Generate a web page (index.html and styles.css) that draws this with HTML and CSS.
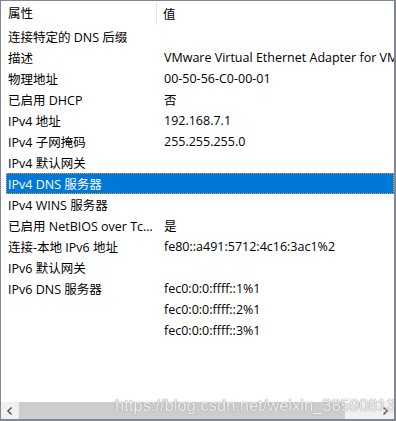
FILE: index.html
```html
<!DOCTYPE html>
<html lang="zh-CN">
<head>
    <meta charset="UTF-8">
    <title>网络连接详细信息</title>
    <link rel="stylesheet" href="styles.css">
</head>
<body>

    <div class="panel">
        <div class="list">
            <div class="header">
                <div class="col-name">属性</div>
                <div class="col-value">值</div>
            </div>

            <div class="row"><div class="name">连接特定的 DNS 后缀</div><div class="value"></div></div>
            <div class="row"><div class="name">描述</div><div class="value">VMware Virtual Ethernet Adapter for VMnet1</div></div>
            <div class="row"><div class="name">物理地址</div><div class="value">00-50-56-C0-00-01</div></div>
            <div class="row"><div class="name">已启用 DHCP</div><div class="value">否</div></div>
            <div class="row"><div class="name">IPv4 地址</div><div class="value">192.168.7.1</div></div>
            <div class="row"><div class="name">IPv4 子网掩码</div><div class="value">255.255.255.0</div></div>
            <div class="row"><div class="name">IPv4 默认网关</div><div class="value"></div></div>
            <div class="row selected"><div class="name">IPv4 DNS 服务器</div><div class="value"></div></div>
            <div class="row"><div class="name">IPv4 WINS 服务器</div><div class="value"></div></div>
            <div class="row"><div class="name">已启用 NetBIOS over Tcpip</div><div class="value">是</div></div>
            <div class="row"><div class="name">连接-本地 IPv6 地址</div><div class="value">fe80::a491:5712:4c16:3ac1%2</div></div>
            <div class="row"><div class="name">IPv6 默认网关</div><div class="value"></div></div>
            <div class="row"><div class="name">IPv6 DNS 服务器</div><div class="value">fec0:0:0:ffff::1%1</div></div>
            <div class="row"><div class="name"></div><div class="value">fec0:0:0:ffff::2%1</div></div>
            <div class="row"><div class="name"></div><div class="value">fec0:0:0:ffff::3%1</div></div>
        </div>

        <div class="hscroll">
            <div class="arrow">
                <svg width="8" height="8" viewBox="0 0 8 8"><path d="M5.5 0.5 L2 4 L5.5 7.5" fill="none" stroke="#606060" stroke-width="1.6"/></svg>
            </div>
            <div class="thumb"></div>
            <div class="track"></div>
            <div class="arrow">
                <svg width="8" height="8" viewBox="0 0 8 8"><path d="M2.5 0.5 L6 4 L2.5 7.5" fill="none" stroke="#606060" stroke-width="1.6"/></svg>
            </div>
        </div>

        <div class="watermark">https://blog.csdn.net/weixin_38590813</div>
    </div>

</body>
</html>
```

FILE: styles.css
```css
* {
    margin: 0;
    padding: 0;
    box-sizing: border-box;
}

body, html {
    width: 100%;
    height: 100%;
    background: #ffffff;
}

body {
    font-family: "Open Sans", "Noto Sans CJK SC", sans-serif;
    font-size: 12.5px;
    color: #000000;
}

.panel {
    width: 396px;
    height: 421px;
    border: 1px solid #828790;
    border-right-width: 2px;
    border-bottom-width: 2px;
    display: flex;
    flex-direction: column;
    position: relative;
    overflow: hidden;
}

.list {
    flex: 1;
    overflow: hidden;
}

.header {
    height: 25px;
    display: flex;
    align-items: center;
    padding-left: 7px;
}

.header .col-name {
    width: 149px;
    height: 23px;
    line-height: 23px;
    border-right: 1px solid #e5e5e5;
}

.header .col-value {
    padding-left: 6px;
}

.row {
    height: 21px;
    margin-left: 5px;
    display: flex;
    align-items: center;
    white-space: nowrap;
}

.row .name {
    width: 158px;
    flex: none;
    padding-left: 2px;
    padding-right: 5px;
    overflow: hidden;
    text-overflow: ellipsis;
}

.row .value {
    flex: 1;
    overflow: hidden;
}

.row.selected {
    background-color: #0078d7;
    color: #ffffff;
    outline: 1px dotted #e8a050;
    outline-offset: -1px;
}

.hscroll {
    height: 17px;
    flex: none;
    display: flex;
    background-color: #f0f0f0;
}

.hscroll .arrow {
    width: 18px;
    display: flex;
    align-items: center;
    justify-content: center;
}

.hscroll .thumb {
    width: 326px;
    background-color: #cdcdcd;
}

.hscroll .track {
    flex: 1;
}

.watermark {
    position: absolute;
    left: 114px;
    bottom: 4px;
    font-family: "Liberation Sans", Arial, sans-serif;
    font-size: 16.5px;
    color: rgba(255, 255, 255, 0.85);
    text-shadow: 0 0 1px #9a9a9a, 0 0 1px #9a9a9a;
    white-space: nowrap;
}
```
